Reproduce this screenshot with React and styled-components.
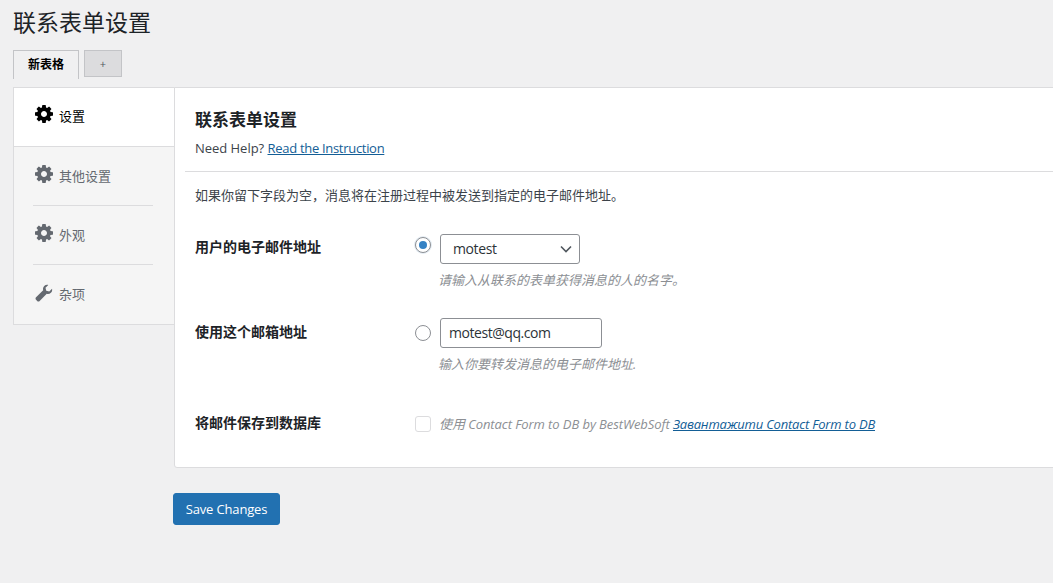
import React from "react";
import styled, { createGlobalStyle } from "styled-components";

const Global = createGlobalStyle`
  html, body { margin: 0; padding: 0; height: 100%; overflow: hidden; }
  body { background: #f0f0f1; color: #3c434a; font: 13px/1.4 "Open Sans", "Noto Sans CJK SC", sans-serif; }
  * { box-sizing: border-box; }
`;

const Page = styled.div`
  width: 1053px;
  height: 583px;
  overflow: hidden;
  padding: 6px 0 0 13px;
`;
const Title = styled.h1`
  margin: 0;
  height: 32px;
  font-size: 23px;
  line-height: 32px;
  font-weight: 400;
  color: #1d2327;
`;
const Tabs = styled.div`
  display: flex;
  align-items: flex-start;
  gap: 5px;
  margin-top: 12px;
  height: 28px;
`;
const Tab = styled.div`
  display: flex;
  align-items: center;
  justify-content: center;
  width: ${p => p.$w}px;
  height: ${p => (p.$active ? 29 : 27)}px;
  border: 1px solid #c3c4c7;
  border-bottom: ${p => (p.$active ? "none" : "1px solid #c3c4c7")};
  background: ${p => (p.$active ? "#f0f0f1" : "#dcdcde")};
  color: ${p => (p.$active ? "#000" : "#50575e")};
  font-size: ${p => (p.$active ? 12 : 11)}px;
  font-weight: ${p => (p.$active ? 700 : 400)};
`;
const Panel = styled.div`
  display: flex;
  align-items: flex-start;
  margin-top: 9px;
  width: 1060px;
`;
const Sidebar = styled.nav`
  width: 162px;
  flex: none;
  background: #f5f5f5;
  border: 1px solid #dcdcde;
  border-right: none;
  display: flex;
  flex-direction: column;
`;
const NavActive = styled.div`
  display: flex;
  align-items: center;
  gap: 6px;
  height: 59px;
  padding: 0 0 2px 21px;
  background: #fff;
  border-bottom: 1px solid #dcdcde;
  color: #000;
`;
const NavItem = styled.div`
  display: flex;
  align-items: center;
  gap: 6px;
  height: ${p => p.$h}px;
  margin: 0 22px 0 19px;
  padding-left: 2px;
  color: #646970;
  border-bottom: ${p => (p.$last ? "none" : "1px solid #dcdcde")};
`;
const NavText = styled.span`
  padding-top: ${p => (p.$last ? 0 : 1)}px;
`;
const IconWrap = styled.span`
  display: flex;
  width: 18px;
  height: 18px;
  flex: none;
  transform: translateY(-2px);
`;
const Content = styled.main`
  flex: 1;
  height: 381px;
  margin-left: -1px;
  background: #fff;
  border: 1px solid #dcdcde;
  border-radius: 0 0 0 3px;
`;
const Head = styled.header`
  height: 84px;
  margin-left: 10px;
  padding: 19px 0 0 10px;
  border-bottom: 1px solid #dcdcde;
`;
const SubTitle = styled.h2`
  margin: 0;
  font-size: 17px;
  line-height: 26px;
  font-weight: 700;
  color: #1d2327;
`;
const Help = styled.p`
  margin: 5px 0 0;
  line-height: 20px;
  color: #3c434a;
  letter-spacing: -0.03px;
`;
const Link = styled.a`
  color: #135e96;
  text-decoration: underline;
  letter-spacing: ${p => p.$ls}px;
`;
const Body = styled.div`
  padding: 13px 0 0 20px;
`;
const Intro = styled.p`
  margin: 0;
  line-height: 20px;
  color: #3c434a;
`;
const Row = styled.div`
  display: grid;
  grid-template-columns: 220px 1fr;
  margin-top: ${p => p.$top}px;
`;
const Label = styled.label`
  font-size: 14px;
  font-weight: 700;
  color: #1d2327;
  line-height: 20px;
  padding-top: ${p => p.$pt || 0}px;
`;
const Control = styled.div`
  display: flex;
  align-items: flex-start;
  gap: 9px;
`;
const Radio = styled.span`
  width: 16px;
  height: 16px;
  flex: none;
  margin-top: ${p => p.$mt}px;
  border-radius: 50%;
  border: 1px solid #8c8f94;
  background: #fff;
  display: flex;
  align-items: center;
  justify-content: center;
  box-shadow: ${p => (p.$on ? "0 0 0 1px #e4ecf3" : "none")};
  &::after {
    content: "";
    display: ${p => (p.$on ? "block" : "none")};
    width: 8px;
    height: 8px;
    border-radius: 50%;
    background: #3582c4;
  }
`;
const Select = styled.div`
  width: 140px;
  height: 30px;
  border: 1px solid #8c8f94;
  border-radius: 3px;
  padding: 0 7px 0 12px;
  display: flex;
  align-items: center;
  justify-content: space-between;
  color: #2c3338;
  font-size: 14px;
  letter-spacing: -0.4px;
  background: #fff;
`;
const Input = styled.div`
  width: 162px;
  height: 30px;
  border: 1px solid #8c8f94;
  border-radius: 3px;
  padding: 0 8px;
  display: flex;
  align-items: center;
  color: #2c3338;
  font-size: 14px;
  letter-spacing: -0.45px;
  background: #fff;
`;
const Desc = styled.p`
  margin: 6px 0 0 23px;
  font-size: 13px;
  line-height: 20px;
  font-style: italic;
  color: #8c8f94;
`;
const Checkbox = styled.span`
  width: 16px;
  height: 16px;
  flex: none;
  margin-top: 3px;
  border: 1px solid #dcdcde;
  border-radius: 3px;
  background: #fff;
`;
const Note = styled.span`
  font-style: italic;
  color: #8c8f94;
  line-height: 20px;
  padding-top: 1px;
  margin-left: -1px;
  letter-spacing: -0.08px;
`;
const Save = styled.button`
  display: block;
  margin: 25px 0 0 160px;
  width: 107px;
  height: 32px;
  border: 1px solid #2271b1;
  border-radius: 3px;
  background: #2271b1;
  color: #fff;
  font: 13px "Open Sans", "Noto Sans CJK SC", sans-serif;
  letter-spacing: -0.15px;
  padding: 0;
`;

const Gear = () => (
  <svg viewBox="0 0 1536 1536" width="18" height="18" fill="currentColor">
    <path d="M1024 768q0-106-75-181t-181-75-181 75-75 181 75 181 181 75 181-75 75-181zm512-109v222q0 12-8 23t-20 13l-185 28q-19 54-39 91 35 50 107 138 10 12 10 25t-9 23q-27 37-99 108t-94 71q-12 0-26-9l-138-108q-44 23-91 38-16 136-29 186-7 28-36 28h-222q-14 0-24.500-8.500t-11.500-21.500l-28-184q-49-16-90-37l-141 107q-10 9-25 9-14 0-25-11-126-114-165-168-7-10-7-23 0-12 8-23 15-21 51-66.500t54-70.500q-27-50-41-99l-183-27q-13-2-21-12.500t-8-23.500v-222q0-12 8-23t19-13l186-28q14-46 39-92-40-57-107-138-10-12-10-24 0-10 9-23 26-36 98.500-107.500t94.500-71.500q13 0 26 10l138 107q44-23 91-38 16-136 29-186 7-28 36-28h222q14 0 24.500 8.500t11.500 21.500l28 184q49 16 90 37l142-107q9-9 24-9 13 0 25 10 129 119 165 170 7 8 7 22 0 12-8 23-15 21-51 66.500t-54 70.500q26 50 41 98l183 28q13 2 21 12.500t8 23.500z" />
  </svg>
);
const Wrench = () => (
  <svg viewBox="0 0 24 24" width="18" height="18" fill="currentColor">
    <path d="M22.7 6.3c.5 1.900 0 4-1.500 5.400-1.500 1.500-3.600 2-5.500 1.400L6.200 22.600c-.9.900-2.400.9-3.300 0l-1.500-1.500c-.9-.9-.9-2.400 0-3.300l9.500-9.500c-.6-1.900-.1-4 1.400-5.500C13.700 1.300 15.800.8 17.700 1.300L14 5l1 4 4 1 3.700-3.700z" />
  </svg>
);
const Chevron = () => (
  <svg viewBox="0 0 12 12" width="12" height="12" fill="none" stroke="#50575e" strokeWidth="1.600">
    <path d="M1 3.500 6 8.500l5-5" />
  </svg>
);

export default function App() {
  return (
    <Page>
      <Global />
      <Title>联系表单设置</Title>
      <Tabs>
        <Tab $active $w={66}>新表格</Tab>
        <Tab $w={38}>+</Tab>
      </Tabs>
      <Panel>
        <Sidebar>
          <NavActive><IconWrap><Gear /></IconWrap>设置</NavActive>
          <NavItem $h={59}><IconWrap><Gear /></IconWrap><NavText>其他设置</NavText></NavItem>
          <NavItem $h={59}><IconWrap><Gear /></IconWrap><NavText>外观</NavText></NavItem>
          <NavItem $h={59} $last><IconWrap><Wrench /></IconWrap><NavText $last>杂项</NavText></NavItem>
        </Sidebar>
        <Content>
          <Head>
            <SubTitle>联系表单设置</SubTitle>
            <Help>Need Help? <Link $ls={-0.3}>Read the Instruction</Link></Help>
          </Head>
          <Body>
            <Intro>如果你留下字段为空，消息将在注册过程中被发送到指定的电子邮件地址。</Intro>
            <Row $top={29}>
              <Label $pt={3}>用户的电子邮件地址</Label>
              <div>
                <Control>
                  <Radio $on $mt={3} />
                  <Select>motest<Chevron /></Select>
                </Control>
                <Desc>请输入从联系的表单获得消息的人的名字。</Desc>
              </div>
            </Row>
            <Row $top={28}>
              <Label $pt={4}>使用这个邮箱地址</Label>
              <div>
                <Control>
                  <Radio $mt={7} />
                  <Input>motest@qq.com</Input>
                </Control>
                <Desc>输入你要转发消息的电子邮件地址.</Desc>
              </div>
            </Row>
            <Row $top={39}>
              <Label>将邮件保存到数据库</Label>
              <Control>
                <Checkbox />
                <Note>使用 Contact Form to DB by BestWebSoft <Link $ls={-0.2}>Завантажити Contact Form to DB</Link></Note>
              </Control>
            </Row>
          </Body>
        </Content>
      </Panel>
      <Save>Save Changes</Save>
    </Page>
  );
}
